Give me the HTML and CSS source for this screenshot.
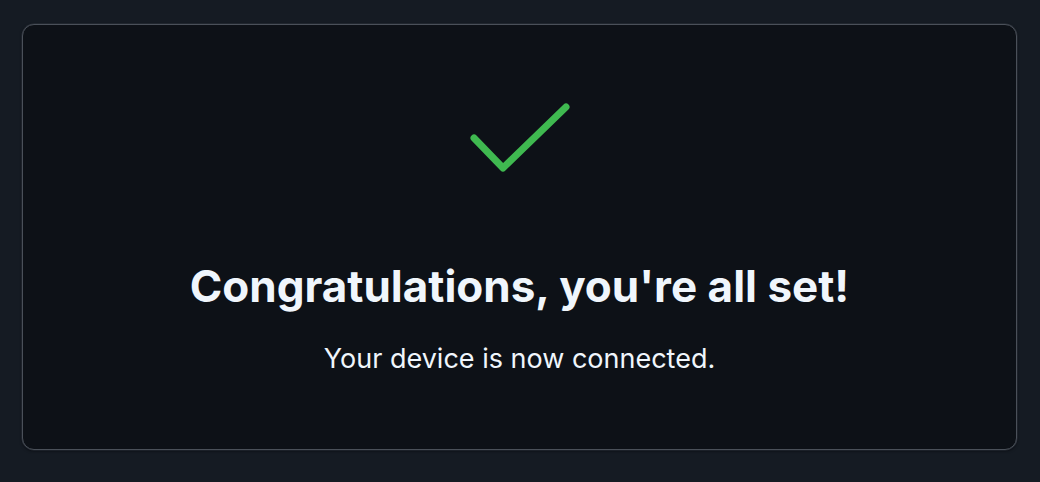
FILE: index.html
```html
<!DOCTYPE html>
<html lang="en">
<head>
<meta charset="utf-8">
<link rel="stylesheet" href="styles.css">
</head>
<body>
  <main class="page">
    <section class="card">
      <svg class="check" width="104" height="76" viewBox="0 0 104 76" aria-hidden="true">
        <path d="M6 38 L35 68 L98 7" fill="none" stroke="#3fb950" stroke-width="7" stroke-linecap="round" stroke-linejoin="round"/>
      </svg>
      <h1 class="title">Congratulations, you're all set!</h1>
      <p class="subtitle">Your device is now connected.</p>
    </section>
  </main>
</body>
</html>
```
FILE: styles.css
```css
html, body {
  margin: 0;
  padding: 0;
  background: #151b23;
  height: 100%;
}
body {
  font-family: Inter, "Noto Sans", "Liberation Sans", sans-serif;
  color: #f0f6fc;
}
.page {
  padding: 24px 23px 32px 22px;
}
.card {
  box-sizing: border-box;
  height: 426px;
  background: #0d1117;
  border: 1px solid #4a5059;
  border-radius: 12px;
  box-shadow: 0 0 0 0.5px rgba(74, 80, 89, 0.5), 0 1px 3px rgba(1, 4, 9, 0.6);
  display: flex;
  flex-direction: column;
  align-items: center;
  padding-top: 75px;
}
.check {
  display: block;
}
.title {
  margin: 84px 0 0;
  font-size: 44px;
  font-weight: 700;
  line-height: 52px;
}
.subtitle {
  margin: 29px 0 0;
  font-size: 27px;
  line-height: 36px;
}
```
